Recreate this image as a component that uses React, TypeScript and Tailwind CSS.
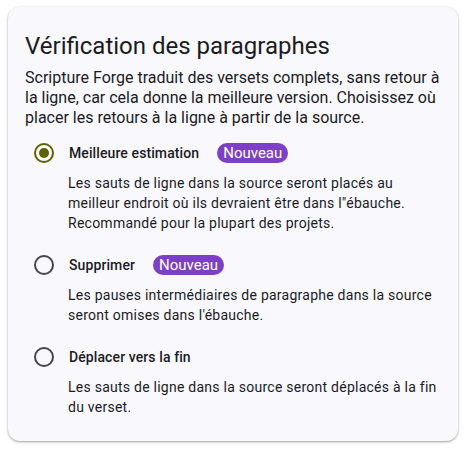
import React from "react";

const options = [
  {
    label: "Meilleure estimation",
    badge: true,
    checked: true,
    desc: "Les sauts de ligne dans la source seront placés au meilleur endroit où ils devraient être dans l\"ébauche. Recommandé pour la plupart des projets.",
  },
  {
    label: "Supprimer",
    badge: true,
    checked: false,
    desc: "Les pauses intermédiaires de paragraphe dans la source seront omises dans l'ébauche.",
  },
  {
    label: "Déplacer vers la fin",
    badge: false,
    checked: false,
    desc: "Les sauts de ligne dans la source seront déplacés à la fin du verset.",
  },
];

export default function App() {
  return (
    <div className="w-[466px] h-[449px] bg-white pt-[7px] pl-[8px]" style={{ fontFamily: "Roboto, sans-serif" }}>
      <div className="w-[450px] h-[434px] rounded-[12px] bg-[#f9f8fd] shadow-[0_1px_3px_rgba(0,0,0,0.3),0_1px_1px_rgba(0,0,0,0.1)] pl-[17px] pr-[12px] pt-[23px]">
        <h2 className="text-[24px] leading-[32px] text-[#1b1b1f]">Vérification des paragraphes</h2>
        <p className="mt-[6px] text-[16px] leading-[20px] text-[#1b1b1f]">
          Scripture Forge traduit des versets complets, sans retour à la ligne, car cela donne la meilleure version. Choisissez où placer les retours à la ligne à partir de la source.
        </p>
        <div className="mt-[15px] flex flex-col gap-[22px]">
          {options.map((o) => (
            <div key={o.label} className="flex flex-col">
              <div className="flex items-center h-[20px]">
                <div className="ml-[9px] w-[20px] h-[20px] flex items-center justify-center">
                  {o.checked ? (
                    <div className="w-[20px] h-[20px] rounded-full border-2 border-[#5b6300] flex items-center justify-center">
                      <div className="w-[10px] h-[10px] rounded-full bg-[#5b6300]" />
                    </div>
                  ) : (
                    <div className="w-[20px] h-[20px] rounded-full border-2 border-[#46454e]" />
                  )}
                </div>
                <span className="ml-[15px] text-[14px] font-medium text-[#1b1b1f] tracking-[0.1px]">{o.label}</span>
                {o.badge && (
                  <span className="ml-[18px] h-[20px] px-[6px] rounded-full bg-[#7c3fc5] text-white text-[15px] leading-[20px]">Nouveau</span>
                )}
              </div>
              <p className="mt-[10px] ml-[43px] text-[14px] leading-[20px] text-[#1b1b1f] tracking-[0.25px]">{o.desc}</p>
            </div>
          ))}
        </div>
      </div>
    </div>
  );
}
